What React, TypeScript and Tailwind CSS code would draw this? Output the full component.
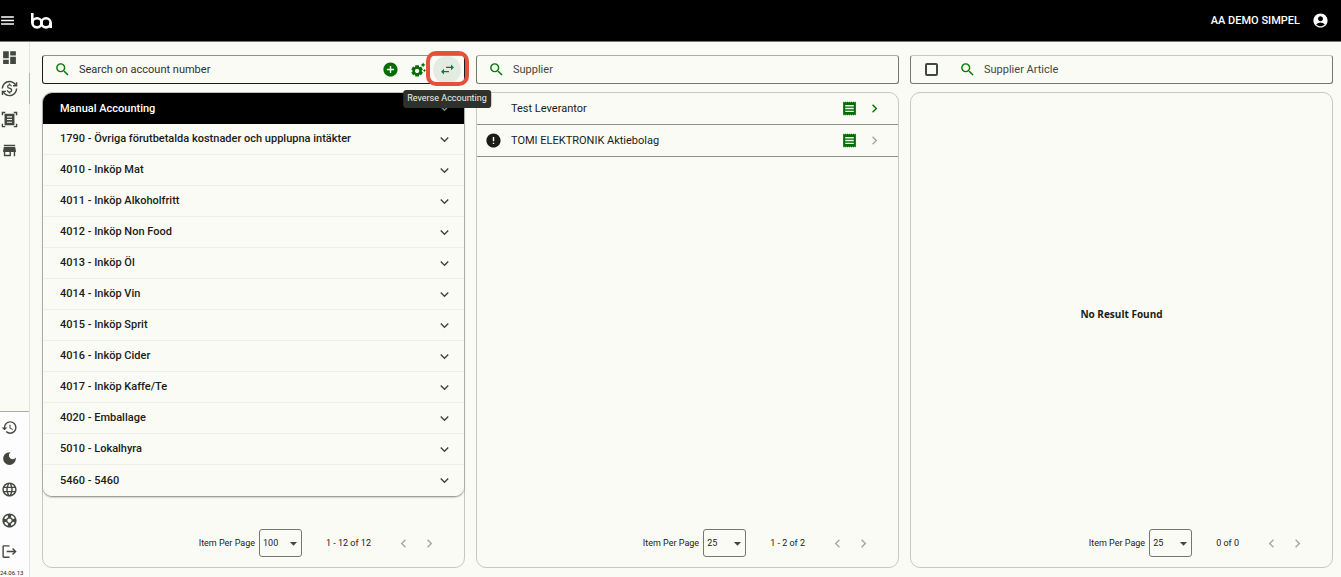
import { useState } from "react";
import type { ComponentType, ReactNode } from "react";
import {
  MdAccountCircle,
  MdAddCircle,
  MdArrowDropDown,
  MdChevronLeft,
  MdChevronRight,
  MdCurrencyExchange,
  MdDarkMode,
  MdDashboard,
  MdError,
  MdExpandMore,
  MdHistory,
  MdLanguage,
  MdLogout,
  MdMenu,
  MdReceipt,
  MdSearch,
  MdSettingsSuggest,
  MdStore,
  MdSupport,
  MdSwapHoriz,
} from "react-icons/md";

function ReceiptScanIcon({ className }: { className?: string }) {
  return (
    <svg viewBox="0 0 24 24" fill="currentColor" className={className}>
      <path d="M1 6V1h5v2H3v3zM18 1h5v5h-2V3h-3zM1 18h2v3h3v2H1zM21 18h2v5h-5v-2h3z" />
      <path fillRule="evenodd" d="M5 4h14v16H5zM8.5 7.4V9h7V7.4zm0 3.8v1.6h7v-1.6zm0 3.8v1.6h7V15z" />
    </svg>
  );
}

const accounts = [
  "1790 - Övriga förutbetalda kostnader och upplupna intäkter",
  "4010 - Inköp Mat",
  "4011 - Inköp Alkoholfritt",
  "4012 - Inköp Non Food",
  "4013 - Inköp Öl",
  "4014 - Inköp Vin",
  "4015 - Inköp Sprit",
  "4016 - Inköp Cider",
  "4017 - Inköp Kaffe/Te",
  "4020 - Emballage",
  "5010 - Lokalhyra",
  "5460 - 5460",
];

const suppliers = [
  { name: "Test Leverantor", warning: false, open: true },
  { name: "TOMI ELEKTRONIK Aktiebolag", warning: true, open: false },
];

const mainNav = [
  { label: "Dashboard", Icon: MdDashboard },
  { label: "Accounting", Icon: MdCurrencyExchange },
  { label: "Scanned documents", Icon: ReceiptScanIcon },
  { label: "Store", Icon: MdStore },
];

const footerNav = [
  { label: "History", Icon: MdHistory },
  { label: "Dark mode", Icon: MdDarkMode },
  { label: "Language", Icon: MdLanguage },
  { label: "Support", Icon: MdSupport },
  { label: "Log out", Icon: MdLogout },
];

function Logo() {
  return (
    <svg viewBox="0 0 21 16" className="h-4 w-[21px]" fill="none" stroke="white" strokeWidth="2.6" aria-label="ba">
      <path d="M1.3 0v10" />
      <circle cx="6" cy="9.8" r="4.6" />
      <circle cx="15" cy="9.8" r="4.6" />
      <path d="M19.7 9.5v5.6" />
    </svg>
  );
}

function SearchField({ label, className }: { label: string; className: string }) {
  return (
    <input
      type="text"
      aria-label={label}
      placeholder={label}
      className={`ml-2 h-full min-w-0 flex-1 bg-transparent text-[11px] outline-none ${className}`}
    />
  );
}

function Pager({ size, range }: { size: string; range: string }) {
  const [value, setValue] = useState(size);
  return (
    <div className="mt-auto flex h-12 items-center justify-end pr-[26px] text-[9px] text-[#1a1c18]">
      <label className="flex items-center gap-1">
        <span className="pt-[2px]">Item Per Page</span>
        <span className="relative flex">
          <select
            value={value}
            onChange={(e) => setValue(e.target.value)}
            className="h-7 w-[43px] appearance-none rounded-[3px] border border-[#73796e] bg-transparent pt-[2px] pl-[3px]"
          >
            <option>25</option>
            <option>50</option>
            <option>100</option>
          </select>
          <MdArrowDropDown className="pointer-events-none absolute top-[6px] right-0 size-[17px] text-[#43483f]" />
        </span>
      </label>
      <span className="ml-6 pt-[2px]">{range}</span>
      <button aria-label="Previous page" className="ml-6 text-[#a6a8a2]">
        <MdChevronLeft className="size-[17px]" />
      </button>
      <button aria-label="Next page" className="ml-[9px] text-[#a6a8a2]">
        <MdChevronRight className="size-[17px]" />
      </button>
    </div>
  );
}

function Column({ search, children }: { search: ReactNode; children: ReactNode }) {
  return (
    <section className="flex min-w-0 flex-1 flex-col gap-2">
      {search}
      <div className="flex min-h-0 flex-1 flex-col rounded-[10px] border border-[#c6c9c1]">{children}</div>
    </section>
  );
}

function NavButton({ label, Icon }: { label: string; Icon: ComponentType<{ className?: string }> }) {
  return (
    <button aria-label={label} className="flex h-[31px] w-full items-center pl-px text-[#43483f]">
      <Icon className="size-[17px]" />
    </button>
  );
}

export default function App() {
  return (
    <div className="flex h-screen flex-col overflow-hidden bg-[#fafbf5] font-[Roboto,sans-serif] text-[#1a1c18]">
      <header className="flex h-[42px] shrink-0 items-center border-b border-[#73796e] bg-black pr-3 text-white">
        <button aria-label="Menu" className="-ml-px">
          <MdMenu className="size-[17px]" />
        </button>
        <div className="ml-[15px]">
          <Logo />
        </div>
        <span className="ml-auto pt-[2px] text-[11px] font-medium">AA DEMO SIMPEL</span>
        <button aria-label="Account" className="ml-3">
          <MdAccountCircle className="size-[17px]" />
        </button>
      </header>

      <div className="flex min-h-0 flex-1">
        <nav className="flex w-[30px] shrink-0 flex-col border-r border-[#e1e3dc]">
          {mainNav.map((item) => (
            <div key={item.label} className={item.label === "Accounting" ? "-mr-px border-r border-[#a9bda5]" : ""}>
              <NavButton {...item} />
            </div>
          ))}
          <div className="mt-auto border-t border-[#a9ada4] bg-[#fdfdfd]">
            {footerNav.map((item) => (
              <NavButton key={item.label} {...item} />
            ))}
            <div className="h-[10px] pt-[2px] text-[6px] leading-[8px] whitespace-nowrap">24.06.13</div>
          </div>
        </nav>

        <main className="flex min-w-0 flex-1 gap-[11px] pt-[13px] pr-2 pb-[9px] pl-3">
          <Column
            search={
              <div className="flex h-[29px] shrink-0 items-center rounded-[3px] border border-[#1a1c18] border-t-[#8d9189] pl-[11px]">
                <MdSearch className="size-[17px] shrink-0 text-[#007a00]" />
                <SearchField label="Search on account number" className="placeholder:text-[#2e312b]" />
                <button aria-label="Add account" className="text-[#006e00]">
                  <MdAddCircle className="size-[17px]" />
                </button>
                <button aria-label="Automatic settings" className="ml-[11px] text-[#006e00]">
                  <MdSettingsSuggest className="size-[17px]" />
                </button>
                <div className="relative mr-[3px] ml-[6px] flex">
                  <button
                    aria-label="Reverse Accounting"
                    className="flex size-7 items-center justify-center rounded-full bg-[#e4ece2] text-[#007a3d]"
                  >
                    <MdSwapHoriz className="size-[17px]" />
                  </button>
                  <span className="pointer-events-none absolute -top-[5px] -left-[7px] h-[35px] w-[43px] rounded-[10px] border-4 border-[#e5503c]" />
                  <span
                    role="tooltip"
                    className="absolute top-[34px] left-1/2 z-10 flex h-[18px] -translate-x-1/2 items-center rounded-[3px] bg-[#2f312d] px-1 text-[9px] whitespace-nowrap text-[#f1f1eb]"
                  >
                    Reverse Accounting
                  </span>
                </div>
              </div>
            }
          >
            <div className="overflow-hidden rounded-[9px] text-[11px] font-medium shadow-[0_1px_2px_rgba(0,0,0,0.5)]">
              <button className="flex h-[31px] w-full items-center justify-between bg-black pr-[11px] pl-[17px] text-white">
                <span className="pt-px">Manual Accounting</span>
                <MdExpandMore className="size-[17px] text-[#83867f]" />
              </button>
              {accounts.map((name, i) => (
                <button
                  key={name}
                  className={`flex h-[31px] w-full items-center justify-between bg-[#fafbf5] pr-[11px] pl-[17px] ${
                    i < accounts.length - 1 ? "border-b border-[#eeefe9]" : ""
                  }`}
                >
                  <span className="pt-px">{name}</span>
                  <MdExpandMore className="size-[17px] text-[#43483f]" />
                </button>
              ))}
            </div>
            <Pager size="100" range="1 - 12 of 12" />
          </Column>

          <Column
            search={
              <div className="flex h-[29px] shrink-0 items-center rounded-[3px] border border-[#73796e] border-t-[#a9ada4] pl-[11px]">
                <MdSearch className="size-[17px] shrink-0 text-[#007a00]" />
                <SearchField label="Supplier" className="placeholder:text-[#43483f]" />
              </div>
            }
          >
            <ul className="text-[11px]">
              {suppliers.map((s) => (
                <li key={s.name} className="flex h-8 items-center border-b border-[#8d9189] pr-[15px] pl-2">
                  <span className="flex w-[26px]">{s.warning && <MdError className="size-[17px]" />}</span>
                  <span className="pt-px">{s.name}</span>
                  <button aria-label={`Receipts for ${s.name}`} className="ml-auto text-[#006e00]">
                    <MdReceipt className="size-[17px]" />
                  </button>
                  <button
                    aria-label={`Open ${s.name}`}
                    className={`ml-2 ${s.open ? "text-[#007a00]" : "text-[#a6a8a2]"}`}
                  >
                    <MdChevronRight className="size-[17px]" />
                  </button>
                </li>
              ))}
            </ul>
            <Pager size="25" range="1 - 2 of 2" />
          </Column>

          <Column
            search={
              <div className="flex h-[29px] shrink-0 items-center rounded-[3px] border border-[#73796e] border-t-[#c6c9c1] pl-[14px]">
                <input
                  type="checkbox"
                  aria-label="Select all articles"
                  className="size-[13px] shrink-0 appearance-none rounded-[2px] border-2 border-[#43483f]"
                />
                <MdSearch className="ml-[21px] size-[17px] shrink-0 text-[#007a00]" />
                <SearchField label="Supplier Article" className="placeholder:text-[#43483f]" />
              </div>
            }
          >
            <p className="flex flex-1 items-center justify-center pt-[17px] font-['Open_Sans',sans-serif] text-[10px] font-bold">
              No Result Found
            </p>
            <Pager size="25" range="0 of 0" />
          </Column>
        </main>
      </div>
    </div>
  );
}
